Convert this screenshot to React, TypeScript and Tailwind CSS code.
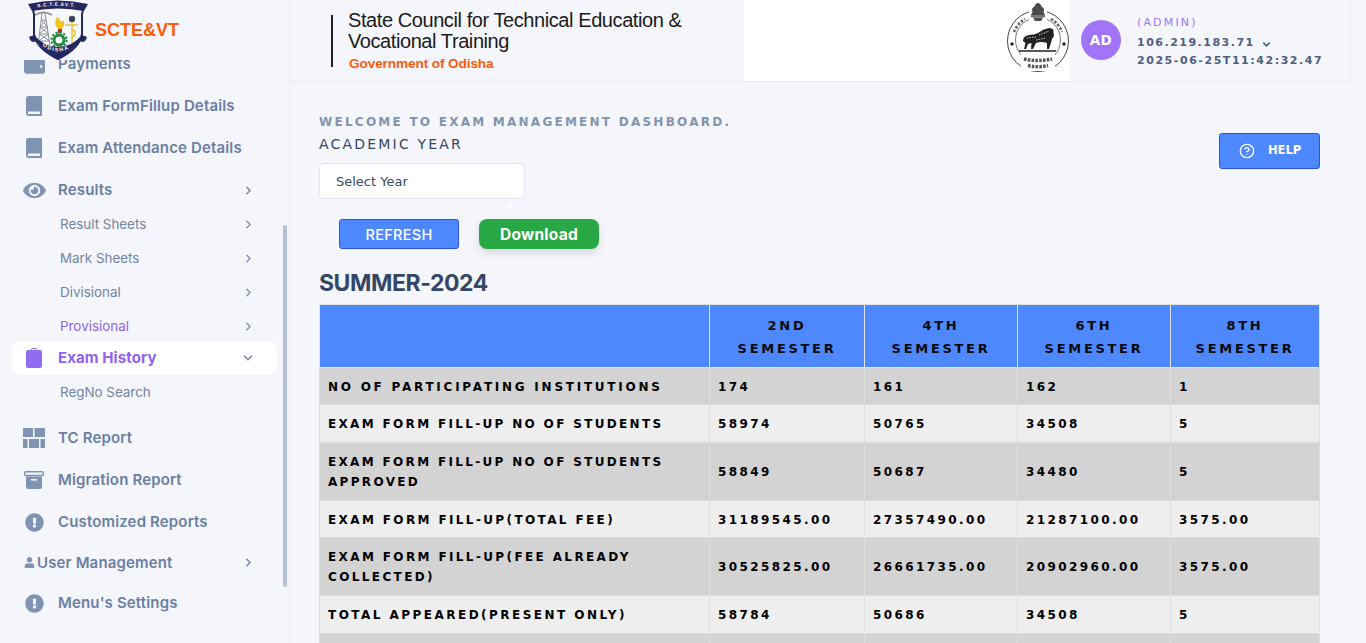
import React from "react";
import { ChevronRight, ChevronDown, CircleHelp } from "lucide-react";
import { FaEye, FaWallet, FaExclamationCircle, FaUser } from "react-icons/fa";

const DJ = "font-['DejaVu_Sans',sans-serif]";

function Logo() {
  return (
    <svg width="62" height="61" viewBox="0 0 62 61" className="shrink-0">
      <path d="M5 6 H57 L55 14 L55 34 Q53 48 31 59 Q9 48 7 34 L7 14 Z" fill="#f7f8fc" stroke="#23275f" strokeWidth="2" />
      <path d="M1 4 Q31 -3 61 4 L57 11 Q31 6 5 11 Z" fill="#23275f" />
      <defs>
        <path id="topArc" d="M6 8.5 Q31 3 56 8.5" />
        <path id="botArc" d="M12 43 Q31 60 50 43" />
      </defs>
      <text fontSize="4.8" fontWeight="700" fill="#fff" fontFamily="Liberation Sans" letterSpacing="0.7">
        <textPath href="#topArc" startOffset="9%">S.C.T.E.&amp;V.T.</textPath>
      </text>
      <g stroke="#8f939c" strokeWidth="1" fill="none">
        <path d="M15 13 L11 46 M18 13 L23 46 M14 20 H19 M13 27 H21 M12 34 H22 M11.5 41 H23 M14 20 L21 27 M19 20 L13 27 M13 27 L22 34 M21 27 L12 34 M12 34 L23 41 M22 34 L11.5 41" />
        <path d="M8 15 Q17 10 25 15" strokeWidth="1.8" />
      </g>
      <path d="M30 17 Q26 24 31 29 L35 29 Q39 24 36 20 Q34 23 33 20 Q32 18 30 17Z" fill="#f3c21f" />
      <rect x="31" y="29" width="4" height="4" fill="#a8322a" />
      <circle cx="32" cy="40" r="5" fill="none" stroke="#1f8a3c" strokeWidth="3" />
      <circle cx="32" cy="40" r="7.6" fill="none" stroke="#1f8a3c" strokeWidth="2" strokeDasharray="2.2 1.8" />
      <circle cx="45" cy="19" r="3.2" fill="#3c4660" />
      <path d="M38 25 H51 M45 22 V43 M45 29 Q51 32 46 37" stroke="#e9c53d" strokeWidth="1.5" fill="none" />
      <path d="M2 37 Q4 44 9 41 Q19 52 31 60 Q43 52 53 41 Q58 44 60 37 L55 35 Q45 47 31 47 Q17 47 7 35 Z" fill="#23275f" />
      <text fontSize="5.4" fontWeight="700" fill="#fff" fontFamily="Liberation Sans" letterSpacing="1.4">
        <textPath href="#botArc" startOffset="10%">ODISHA</textPath>
      </text>
    </svg>
  );
}

function Emblem() {
  return (
    <svg width="64" height="74" viewBox="0 0 64 74" className="shrink-0">
      <circle cx="32" cy="41" r="30.5" fill="#fff" stroke="#444" strokeWidth="1" />
      <circle cx="32" cy="40" r="22.5" fill="#fff" stroke="#555" strokeWidth="0.8" />
      <path d="M8 32 A25.5 25.5 0 0 1 19 19" stroke="#666" strokeWidth="2.6" fill="none" strokeDasharray="2.5 1.6" />
      <path d="M45 19 A25.5 25.5 0 0 1 56 32" stroke="#666" strokeWidth="2.6" fill="none" strokeDasharray="2.5 1.6" />
      <rect x="23" y="2" width="18" height="20" fill="#fff" />
      <path d="M28 7 Q30 3 32 3 Q34 3 36 7 Q39 8 37.5 12 L39 15 H25 L26.5 12 Q25 8 28 7 Z" fill="#4a4a4a" />
      <rect x="25" y="15" width="14" height="2.4" fill="#777" />
      <path d="M27 17.4 L37 17.4 L35 21 H29 Z" fill="#4a4a4a" />
      <circle cx="6" cy="44" r="1.7" fill="#222" />
      <circle cx="58" cy="44" r="1.7" fill="#222" />
      <path d="M17 41 Q17 36 23 35 Q28 35 32 33 Q37 29 43 28 L47 29 L48 36 L46 39 L45 43 L43 49 L41 49 L41 43 Q35 41 30 43 L27 49 L25 49 L25.5 43 L22 44 L20 49 L18 49 L19.5 43 Z" fill="#222" />
      <path d="M21 38 L30 37 M33 35 L43 31 M30 40 L40 38" stroke="#fff" strokeWidth="0.8" strokeDasharray="1.4 1.2" />
      <path d="M13 51 H50" stroke="#222" strokeWidth="1.6" />
      <rect x="15" y="54" width="34" height="17" fill="#fff" />
      <path d="M18 59 Q32 62 46 59" stroke="#555" strokeWidth="3.4" fill="none" strokeDasharray="2.6 1.2" />
      <path d="M22 65.5 Q32 68 42 65.5" stroke="#555" strokeWidth="3.4" fill="none" strokeDasharray="2.6 1.2" />
    </svg>
  );
}

const iconColor = "#7f93b2";
const iconCls = "text-[#7f93b2]";

function BookIcon() {
  return (
    <svg width="16" height="20" viewBox="0 0 16 20">
      <path d="M2.5 0 H15 Q16 0 16 1 V19 Q16 20 15 20 H3 Q0 20 0 17 V2.5 Q0 0 2.5 0 Z" fill={iconColor} />
      <rect x="2" y="15.5" width="12" height="2.5" fill="#f4f6fb" />
    </svg>
  );
}

function ClipIcon() {
  return (
    <svg width="16" height="20" viewBox="0 0 16 20">
      <path d="M2 2 H5 Q5 0 7 0 H9 Q11 0 11 2 H14 Q16 2 16 4 V18 Q16 20 14 20 H2 Q0 20 0 18 V4 Q0 2 2 2 Z" fill="#8f6cf2" />
      <rect x="6" y="1" width="4" height="1" fill="#fff" />
    </svg>
  );
}

function ArchiveIcon() {
  return (
    <svg width="20" height="18" viewBox="0 0 20 18">
      <rect x="0.7" y="0.7" width="18.6" height="3.8" rx="0.8" fill="none" stroke={iconColor} strokeWidth="1.4" />
      <path d="M2 5.5 H18 V16 Q18 18 16 18 H4 Q2 18 2 16 Z" fill={iconColor} />
      <rect x="7" y="8" width="6" height="1.6" fill="#f4f6fb" />
    </svg>
  );
}

function TcIcon() {
  return (
    <svg width="22" height="20" viewBox="0 0 22 20" fill={iconColor}>
      <rect x="0" y="0" width="10" height="9" />
      <rect x="11.5" y="0" width="10.5" height="9" />
      <rect x="0" y="11" width="4.5" height="9" />
      <rect x="6" y="11" width="10" height="9" />
      <rect x="17.5" y="11" width="4.5" height="9" />
    </svg>
  );
}

const mainLabel = "pt-[1px] text-[15px] font-semibold tracking-[0.15px] text-[#6b7fa3]";

function Row({ icon, label, chevron }: { icon: React.ReactNode; label: string; chevron?: boolean }) {
  return (
    <div className="flex h-[42px] items-center">
      <div className="flex w-[46px] shrink-0 items-center justify-center pl-[22px]">{icon}</div>
      <span className={`ml-[12px] ${mainLabel}`}>{label}</span>
      {chevron && <ChevronRight size={13} strokeWidth={3} className="ml-auto mr-[34px] text-[#7b8bab]" />}
    </div>
  );
}

function Sub({ label, active }: { label: string; active?: boolean }) {
  return (
    <div className="flex h-[34px] items-center pl-[60px]">
      <span className={`text-[13.4px] ${active ? "text-[#8f63f0]" : "text-[#74849f]"}`}>{label}</span>
      <ChevronRight size={13} strokeWidth={2.2} className="ml-auto mr-[34px] text-[#7b8bab]" />
    </div>
  );
}

function Sidebar() {
  return (
    <aside className="relative flex h-[643px] w-[290px] shrink-0 flex-col overflow-hidden border-r border-[#ecedf3] bg-[#f4f6fb] font-['Inter',sans-serif]">
      <div className="z-10 flex h-[60px] shrink-0 items-start gap-[6px] bg-[#f4f6fb] pl-[27px]">
        <Logo />
        <span className="mt-[19px] font-['Liberation_Sans',sans-serif] text-[18px] font-bold leading-[22px] text-[#ff5a0a]">SCTE&amp;VT</span>
      </div>
      <div className="-mt-[17px]">
        <Row icon={<FaWallet size={21} className={iconCls} />} label="Payments" />
        <Row icon={<BookIcon />} label="Exam FormFillup Details" />
        <Row icon={<BookIcon />} label="Exam Attendance Details" />
        <Row icon={<FaEye size={23} className={iconCls} />} label="Results" chevron />
        <div className="-mt-[4px]">
          <Sub label="Result Sheets" />
          <Sub label="Mark Sheets" />
          <Sub label="Divisional" />
          <Sub label="Provisional" active />
        </div>
        <div className="mx-[12px] -mt-[2px] flex h-[34px] items-center rounded-[8px] bg-white">
          <div className="flex w-[34px] shrink-0 items-center justify-center pl-[10px]">
            <ClipIcon />
          </div>
          <span className="ml-[12px] text-[15px] font-bold tracking-[0.1px] text-[#8f63f0]">Exam History</span>
          <ChevronDown size={14} strokeWidth={3} className="ml-auto mr-[22px] text-[#7b8bab]" />
        </div>
        <div className="flex h-[34px] items-center pl-[60px]">
          <span className="text-[13.4px] text-[#74849f]">RegNo Search</span>
        </div>
        <div className="mt-[8px]">
          <Row icon={<TcIcon />} label="TC Report" />
          <Row icon={<ArchiveIcon />} label="Migration Report" />
          <Row icon={<FaExclamationCircle size={19} className={iconCls} />} label="Customized Reports" />
          <div className="flex h-[39px] items-center pl-[24px]">
            <FaUser size={11} className={iconCls} />
            <span className={`ml-[2px] ${mainLabel}`}>User Management</span>
            <ChevronRight size={13} strokeWidth={3} className="ml-auto mr-[34px] text-[#7b8bab]" />
          </div>
          <Row icon={<FaExclamationCircle size={19} className={iconCls} />} label="Menu's Settings" />
        </div>
      </div>
      <div className="absolute left-[283px] top-[225px] h-[362px] w-[4px] rounded bg-[#b7c1d5]" />
    </aside>
  );
}

function Header() {
  return (
    <header className="flex h-[82px] w-[1059px] items-stretch border-b border-[#e9ebf1] bg-[#f4f6fb] shadow-[2px_0_3px_rgba(0,0,0,0.03)]">
      <div className="flex w-[454px] items-start pl-[41px] pt-[15px]">
        <div className="h-[52px] w-[2px] bg-[#222]" />
        <div className="ml-[15px] -mt-[5px] font-['Liberation_Sans',sans-serif]">
          <div className="w-[350px] text-[20px] leading-[21px] tracking-[-0.42px] text-[#1b1b1b]">
            State Council for Technical Education &amp;<br />Vocational Training
          </div>
          <div className="ml-[1px] mt-[4px] text-[13.6px] font-bold leading-[16px] tracking-[-0.1px] text-[#ff5a0a]">Government of Odisha</div>
        </div>
      </div>
      <div className="flex h-[81px] w-[326px] items-start justify-end bg-white">
        <Emblem />
      </div>
      <div className={`flex flex-1 items-start pl-[11px] ${DJ}`}>
        <div className="mt-[20px] flex h-[40px] w-[40px] items-center justify-center rounded-full bg-[#a274f8] text-[13.5px] font-bold tracking-[0.5px] text-white">AD</div>
        <div className="ml-[16px] mt-[14px]">
          <div className="text-[11px] leading-[18px] tracking-[2.15px] text-[#a274f8]">(ADMIN)</div>
          <div className="mt-[2px] flex h-[18px] items-center text-[11px] font-bold tracking-[1.5px] text-[#4d5f82]">
            106.219.183.71
            <ChevronDown size={11} strokeWidth={3.5} className="ml-[6px] mt-[2px]" />
          </div>
          <div className="text-[11px] font-bold leading-[17px] tracking-[1.55px] text-[#4d5f82]">2025-06-25T11:42:32.47</div>
        </div>
      </div>
    </header>
  );
}

const rows: { label: string; v: string[]; h: string; track: string }[] = [
  { label: "NO OF PARTICIPATING INSTITUTIONS", v: ["174", "161", "162", "1"], h: "h-[37px]", track: "tracking-[2.75px]" },
  { label: "EXAM FORM FILL-UP NO OF STUDENTS", v: ["58974", "50765", "34508", "5"], h: "h-[38px]", track: "tracking-[2.33px]" },
  { label: "EXAM FORM FILL-UP NO OF STUDENTS APPROVED", v: ["58849", "50687", "34480", "5"], h: "h-[58px]", track: "tracking-[2.33px]" },
  { label: "EXAM FORM FILL-UP(TOTAL FEE)", v: ["31189545.00", "27357490.00", "21287100.00", "3575.00"], h: "h-[37px]", track: "tracking-[2.38px]" },
  { label: "EXAM FORM FILL-UP(FEE ALREADY COLLECTED)", v: ["30525825.00", "26661735.00", "20902960.00", "3575.00"], h: "h-[58px]", track: "tracking-[2.38px]" },
  { label: "TOTAL APPEARED(PRESENT ONLY)", v: ["58784", "50686", "34508", "5"], h: "h-[38px]", track: "tracking-[2.47px]" },
];

function DataTable() {
  const th = "border border-[#e3e3e3] px-[8px] pt-[1px] text-center align-middle text-[13px] font-bold leading-[23px] tracking-[2.7px] text-[#0a0a0a]";
  const td = "border border-[#dedede] px-[8px] pt-[1px] align-middle text-[12px] font-bold leading-[20px] text-black";
  return (
    <table className={`mt-[6px] w-[1000px] table-fixed border-collapse ${DJ}`}>
      <colgroup>
        <col className="w-[390px]" />
        <col className="w-[155px]" />
        <col className="w-[153px]" />
        <col className="w-[153px]" />
        <col className="w-[149px]" />
      </colgroup>
      <thead>
        <tr className="h-[63px] bg-[#4d88ff]">
          <th className={th}></th>
          <th className={th}>2ND<br />SEMESTER</th>
          <th className={th}>4TH<br />SEMESTER</th>
          <th className={th}>6TH<br />SEMESTER</th>
          <th className={th}>8TH<br />SEMESTER</th>
        </tr>
      </thead>
      <tbody>
        {rows.map((r, i) => (
          <tr key={i} className={`${r.h} ${i % 2 === 0 ? "bg-[#d3d3d3]" : "bg-[#eeeeee]"}`}>
            <td className={`${td} ${r.track}`}>{r.label}</td>
            {r.v.map((x, j) => (
              <td key={j} className={`${td} tracking-[2.4px]`}>{x}</td>
            ))}
          </tr>
        ))}
        <tr className="h-[38px] bg-[#d3d3d3]">
          <td className={td}></td><td className={td}></td><td className={td}></td><td className={td}></td><td className={td}></td>
        </tr>
      </tbody>
    </table>
  );
}

export default function App() {
  return (
    <div className="flex h-[643px] w-[1366px] overflow-hidden bg-[#f4f6fb]">
      <Sidebar />
      <div className="min-w-0 flex-1">
        <Header />
        <main className="relative pl-[29px]">
          <div className={`pt-[32px] text-[12px] font-bold leading-[16px] tracking-[2.25px] text-[#8094ae] ${DJ}`}>
            WELCOME TO EXAM MANAGEMENT DASHBOARD.
          </div>
          <div className={`mt-[5px] text-[14px] leading-[18px] tracking-[2.2px] text-[#344767] ${DJ}`}>ACADEMIC YEAR</div>
          <div className={`relative mt-[10px] flex h-[36px] w-[206px] items-center rounded-[4px] border border-[#e2e4f0] bg-white pl-[16px] pt-[1px] text-[13px] text-[#3b4a63] ${DJ}`}>
            Select Year
            <ChevronDown size={9} strokeWidth={4} className="absolute left-[185px] top-[37px] text-white" />
          </div>
          <div className="ml-[20px] mt-[20px] flex gap-[20px]">
            <button className="h-[30px] w-[120px] rounded-[3px] border border-[#2a52f0] bg-[#4d88ff] pt-[1px] font-['Inter',sans-serif] text-[14.5px] font-medium tracking-[0.3px] text-white">REFRESH</button>
            <button className="h-[30px] w-[120px] rounded-[8px] bg-[#28a745] pt-[1px] font-['Inter',sans-serif] text-[15.5px] font-bold tracking-[0.25px] text-white shadow-[0_4px_8px_rgba(0,0,0,0.12)]">Download</button>
          </div>
          <h2 className="mt-[19px] font-['Inter',sans-serif] text-[23px] font-bold leading-[30px] tracking-[-0.45px] text-[#344767]">SUMMER-2024</h2>
          <button className={`absolute left-[929px] top-[51px] flex h-[36px] w-[101px] items-center rounded-[3px] border border-[#2a52f0] bg-[#4d88ff] pl-[19px] text-[11.5px] font-bold text-white ${DJ}`}>
            <CircleHelp size={16} strokeWidth={2} />
            <span className="ml-[13px]">HELP</span>
          </button>
          <DataTable />
        </main>
      </div>
    </div>
  );
}
